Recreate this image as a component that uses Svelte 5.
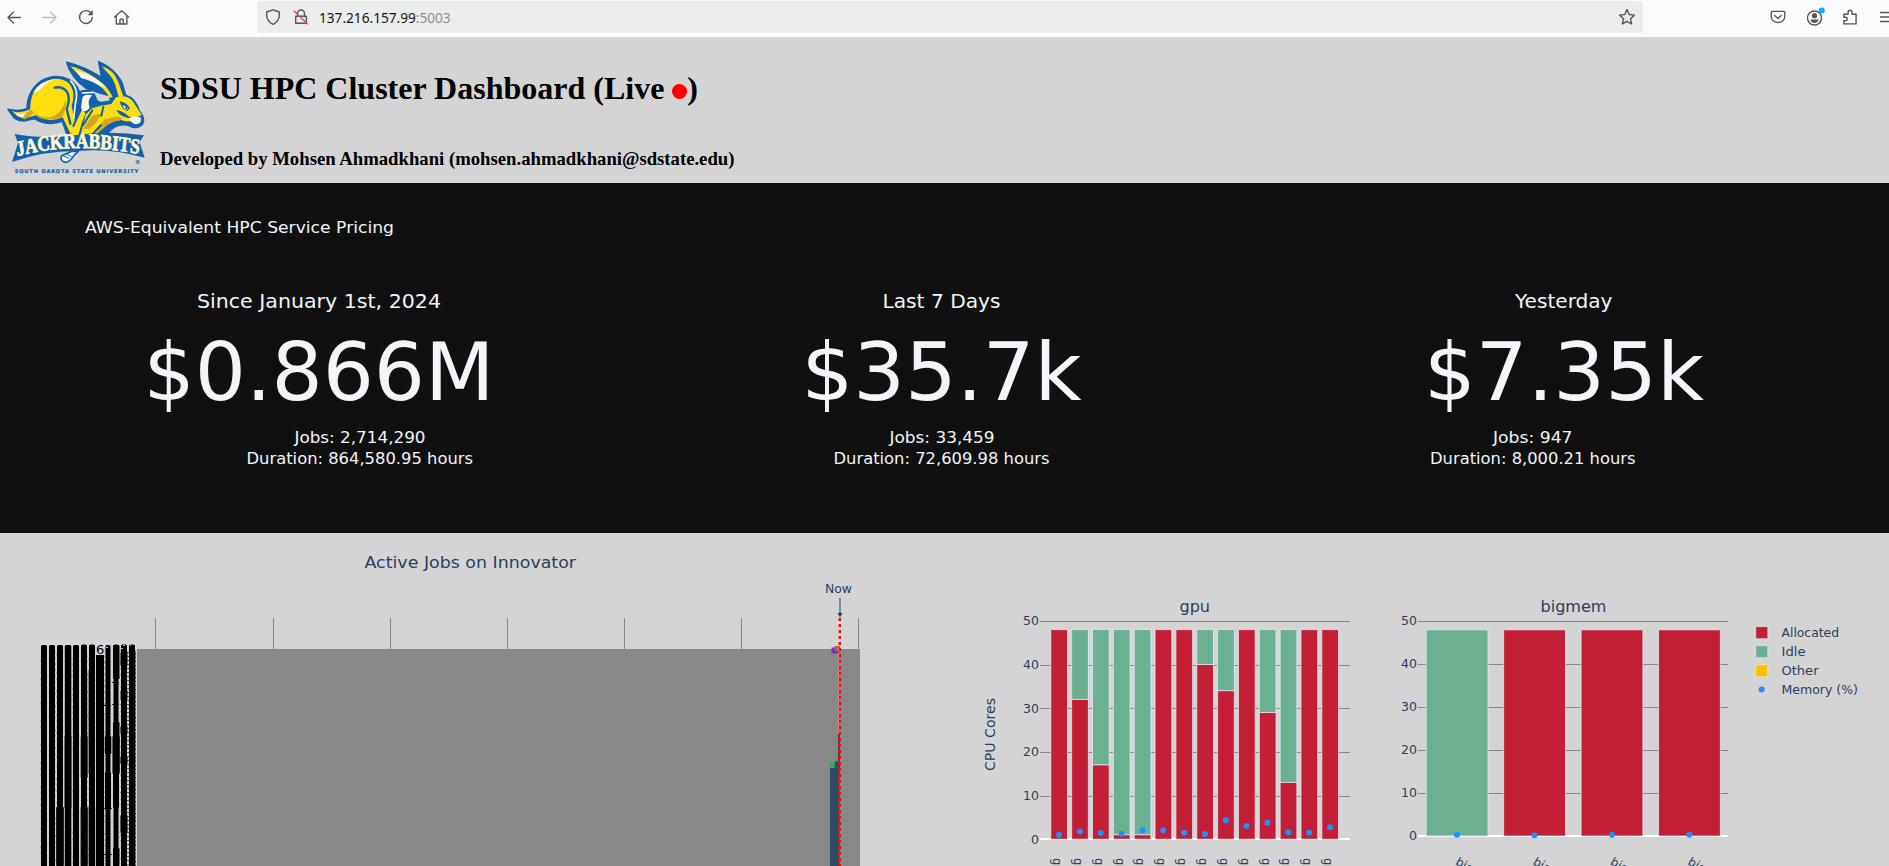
<script>
  const stats = [
    { title: 'Since January 1st, 2024', tx: [197, 441], value: '$0.866M', vx: [143.5, 494.5], jobs: 'Jobs: 2,714,290', jx: [294.5, 425.5], dur: 'Duration: 864,580.95 hours', dx: [246.5, 473] },
    { title: 'Last 7 Days', tx: [882.5, 1000.5], value: '$35.7k', vx: [801.5, 1081.5], jobs: 'Jobs: 33,459', jx: [889.5, 994.5], dur: 'Duration: 72,609.98 hours', dx: [833.5, 1049.5] },
    { title: 'Yesterday', tx: [1515, 1612.5], value: '$7.35k', vx: [1424, 1704], jobs: 'Jobs: 947', jx: [1493, 1572.5], dur: 'Duration: 8,000.21 hours', dx: [1430, 1635.5] }
  ];
  const gpu = [
    [48, 835], [32, 831.6], [17, 833], [1, 833.8], [1, 830.2], [48, 830.5], [48, 832.8],
    [40, 834], [34, 820.2], [48, 826], [29, 822.8], [13, 832.5], [48, 832.8], [48, 827.3]
  ];
  const bigmem = [[0, 834.8], [48, 835.3], [48, 834.8], [48, 834.8]];
  const ticks = [50, 40, 30, 20, 10, 0];
  const months = [155.5, 273.5, 390.5, 507.5, 624.5, 741.5, 858.5];
  const yG = (v) => 839.2 - v * 4.367;
  const yB = (v) => 836 - v * 4.296;
  const cols = [
    [41, 6, 645], [49, 6, 645], [57, 6, 645], [64.8, 6.5, 645], [73, 6, 645], [81, 6, 644.5],
    [89, 6, 644.5], [96, 8, 655], [105.5, 5, 645], [113.5, 5, 644.5], [121, 6, 644.5], [129, 6, 644.5]
  ];
  // swellings where the overlapping tick labels fill their column: x, y, width, height, opacity
  const swells = [
    [56, 807, 8, 59, 0.85], [80.5, 807, 7.5, 59, 0.8], [88, 807, 7.5, 59, 0.35], [64, 736, 8, 72, 0.4],
    [80.5, 736, 7.5, 42, 0.6], [87.5, 670, 1.5, 104, 0.35], [104.8, 736, 6.5, 18, 1], [105, 772, 6, 38, 1],
    [113, 645, 6.5, 34, 1], [113, 722, 6.5, 50, 1], [112.3, 736, 7.5, 38, 0.8], [113, 772, 6, 36, 1],
    [113, 848, 6.5, 18, 1], [120.4, 652, 7.2, 14, 0.8], [120.4, 690, 7.2, 10, 0.7], [120.4, 726, 7.2, 8, 0.8],
    [120.4, 756, 7.2, 8, 0.9], [120.4, 815, 7.2, 18, 0.9], [135, 650, 0.8, 216, 0.5]
  ];
  // deterministic speckles along the edges of the label columns
  const specks = [];
  for (let i = 0; i < 420; i++) {
    const c = cols[(i * 7) % 12];
    specks.push([i % 2 ? c[0] + c[1] : c[0] - 0.8, 650 + ((i * 53) % 214), 0.08 + ((i * 13) % 7) / 30]);
  }
  const fringe = Array.from({ length: 54 }, (_, i) => 652 + i * 4);
  const legend = [['Allocated', '#c21f37', 57.5], ['Idle', '#6cb092', 24], ['Other', '#ffc000', 37], ['Memory (%)', '', 76.5]];
</script>

<div class="page">
  <nav class="bar">
    <div class="nav">
      <svg width="16" height="16" viewBox="0 0 16 16"><path d="M14.500 8.500H2M7.500 3 2 8.500 7.500 14" /></svg>
      <svg class="dim" width="16" height="16" viewBox="0 0 16 16"><path d="M1 8.500h13M8.500 3 14 8.500 8.500 14" /></svg>
      <svg width="16" height="16" viewBox="0 0 16 16"><path d="M12.700 3.800A6.400 6.400 0 1 0 14.300 8.500" /><path class="solid" d="M14.800 1v5.200H9.600z" /></svg>
      <svg width="16" height="16" viewBox="0 0 16 16"><path d="M.6 8 7.600 1.700 14.600 8M2.300 7v8h10.600V7M5.900 15v-3.500q0-1.500 1.700-1.500t1.700 1.500V15" /></svg>
    </div>
    <div class="url">
      <svg width="16" height="16" viewBox="0 0 16 16"><path d="M8 .8 14.300 3v3.500Q14 12.500 8 15.300 2 12.500 1.700 6.500V3z" /></svg>
      <svg class="lock" width="16" height="16" viewBox="0 0 16 16"><path d="M4.500 7V4.500a3.500 3.500 0 0 1 7 0V7M2.700 7.200h10.600v7H2.700z" /><path class="slash" d="m1 2 13.500 13" /></svg>
      <span class="host">137.216.157.99</span><span class="port">:5003</span>
      <svg class="star" width="18" height="18" viewBox="0 0 18 18"><path d="m9 1.600 2.200 4.900 5.300.6-4 3.600 1.100 5.300L9 13.300 4.400 16l1.100-5.300-4-3.600 5.300-.6z" /></svg>
    </div>
    <div class="tools">
      <svg width="16" height="16" viewBox="0 0 16 16"><path d="M2.500 2.400h11q1.300 0 1.300 1.300v3.800a6.800 6 0 0 1-13.600 0V3.700q0-1.300 1.300-1.300zM4.800 6.500 8 9.500l3.200-3" /></svg>
      <svg class="acct" width="18" height="20" viewBox="0 0 18 20"><circle cx="7.500" cy="11" r="7" /><circle class="solid" cx="7.500" cy="8.700" r="2.600" /><path class="solid" d="M3.300 12.500h8.400Q10.500 16 7.500 16t-4.200-3.500z" /><circle class="dot" cx="14.800" cy="3.500" r="3" /></svg>
      <svg width="16" height="16" viewBox="0 0 16 16"><path d="M1.800 5.300h4.300V3.200a1.900 1.900 0 0 1 3.800 0v2.100h4.200v9.600H1.800v-3.200h1.800a1.700 1.700 0 0 0 0-3.400H1.800z" /></svg>
      <svg class="menu" width="9" height="16" viewBox="0 0 9 16"><path d="M0 3.500h9M0 8h9M0 12.500h9" /></svg>
    </div>
  </nav>

  <header>
    <svg class="logo" width="160" height="143" viewBox="0 0 480 429">
      <g stroke-linejoin="round" stroke-linecap="round">
        <path fill="#1161ad" stroke="#1161ad" stroke-width="5" d="M24 208Q55 216 81 206 83 151 124 123 164 98 208 119 229 130 239 158 243 149 277 152L287 173Q290 188 306 188L331 183 329 167Q292 158 258 144 215 116 200 67 253 80 305 113L296 65Q343 85 365 126L377 166Q405 174 418 213 437 238 428 251 412 270 389 257 349 246 323 280L300 294H205L187 244Q143 259 104 236L86 239Q65 249 43 234z" />
        <path fill="#ffde10" d="M34 212Q63 224 91 207 89 156 126 130 170 104 205 128 229 153 215 197L226 254 213 284 188 232Q145 250 107 226 72 239 55 229z" />
        <path fill="#d5a51c" d="M96 211Q114 235 150 231 183 226 198 177 199 213 184 232 144 246 109 226zM61 229Q83 220 92 207L101 218Q86 235 70 238z" />
        <path fill="#f6f6ef" d="M43 219Q65 226 78 219L69 232Q57 235 43 219zM99 158Q119 124 164 117 131 134 116 153zM247 174Q252 160 277 166 260 181 269 203 254 221 242 210z" />
        <path fill="none" stroke="#1161ad" stroke-width="7" d="M164 143Q192 137 204 161 210 184 200 206L211 251" />
        <path fill="none" stroke="#f6f6ef" stroke-width="5" d="M212 123Q238 148 226 191L221 236M247 159 281 157" />
        <path fill="#ffde10" d="M222 249 241 207 257 220 245 249 233 294H211zM257 224 276 205Q306 194 334 192L348 172Q379 162 398 183L425 225Q412 233 389 231 370 213 348 210 366 239 407 234 393 251 362 240 331 243 307 267L282 289H241z" />
        <path fill="#d5a51c" d="M276 227 306 220 286 251 267 267 249 267zM311 239 350 229Q372 233 362 240 331 243 307 267L287 284z" />
        <path fill="#ffde10" d="M211 79Q239 83 290 116 323 138 338 171L329 174Q315 145 276 127 240 112 211 79zM306 79Q340 88 355 126L370 170 356 170Q347 126 306 79z" />
        <path fill="#f6f6ef" d="M225 91Q280 103 321 145 277 128 248 119 237 107 225 91zM387 235Q405 224 423 233 426 249 412 252 396 255 387 235z" />
        <path fill="#1161ad" d="M240 114Q279 121 309 146L323 164Q280 155 257 142zM300 82Q333 100 346 134L351 166 340 166Q331 140 306 119zM359 184Q378 186 390 204L382 213Q365 208 359 184z" />
        <path fill="#fff" d="M367 195 385 204 379 210Q370 204 367 195z" /><circle cx="379" cy="204" r="3" fill="#12334e" />
        <path fill="none" stroke="#1161ad" stroke-width="6" d="M243 208 220 258M277 211 250 255M303 255 270 291M310 200 304 227" />
        <path fill="#1161ad" d="M44 282Q130 299 235 284 340 271 432 286L419 306 434 353Q328 324 235 333 131 332 36 366L54 310z" />
        <path fill="#f5f7f8" stroke="#1161ad" stroke-width="5" d="M216 334 185 347Q178 360 194 367 210 367 222 346L235 334z" />
        <path fill="none" stroke="#1161ad" stroke-width="3" d="m189 347 18 8m-9-14 16 9" />
      </g>
      <path id="arc" fill="none" d="M63 348Q280 303 513 343" />
      <g transform="scale(.82 1)"><text class="team"><textPath href="#arc">JACKRABBITS</textPath></text></g>
      <text class="school" x="44" y="398" textLength="371" lengthAdjust="spacing">SOUTH DAKOTA STATE UNIVERSITY</text>
      <text class="reg" x="404" y="371">®</text>
    </svg>
    <div class="heads">
      <h1>SDSU HPC Cluster Dashboard (Live <i></i>)</h1>
      <h3>Developed by Mohsen Ahmadkhani (mohsen.ahmadkhani@sdstate.edu)</h3>
    </div>
  </header>

  <section class="pricing">
    <svg width="1889" height="350" viewBox="0 183 1889 350">
      <text x="85" y="232.500" font-size="16.500" textLength="309" lengthAdjust="spacingAndGlyphs">AWS-Equivalent HPC Service Pricing</text>
      {#each stats as s}
        <text x={s.tx[0]} y="307.500" font-size="20" textLength={s.tx[1] - s.tx[0]} lengthAdjust="spacingAndGlyphs">{s.title}</text>
        <text x={s.vx[0]} y="400" font-size="80" textLength={s.vx[1] - s.vx[0]} lengthAdjust="spacingAndGlyphs">{s.value}</text>
        <text x={s.jx[0]} y="442.700" font-size="16" textLength={s.jx[1] - s.jx[0]} lengthAdjust="spacingAndGlyphs">{s.jobs}</text>
        <text x={s.dx[0]} y="464" font-size="16" textLength={s.dx[1] - s.dx[0]} lengthAdjust="spacingAndGlyphs">{s.dur}</text>
      {/each}
    </svg>
  </section>

  <section class="charts">
    <svg width="945" height="333" viewBox="0 533 945 333">
      <text x="364.500" y="568" font-size="16.500" textLength="211.500" lengthAdjust="spacingAndGlyphs">Active Jobs on Innovator</text>
      {#each months as m}<path stroke="#888" d="M{m} 618V650" />{/each}
      <path fill="#888" d="M137 649H860V866H137z" />
      {#each cols as c}<rect x={c[0]} y={c[2]} width={c[1]} height="230" rx={c[2] > 650 ? 0 : 1.5} />{/each}
      {#each swells as s}<rect x={s[0]} y={s[1]} width={s[2]} height={s[3]} opacity={s[4]} rx="1" />{/each}
      {#each specks as p}<rect x={p[0]} y={p[1]} width="1" height="2" opacity={p[2]} />{/each}
      {#each fringe as f}<path stroke="#000" opacity=".6" d="M127 {f}.5h2M135 {f + 1}.5h1" />{/each}
      <path stroke="#000" d="M104 808.500h8M104 854.500h8M112 704.500h7M104 705.500h7M112 682.500h7" stroke-width=".8" />
      <path fill="#bbb" d="M123 645h2v1h-2zM121 648h2v1h-2zM106 647h2v1h-2zM130 645h1v1h-1z" />
      <text x="96" y="653.500" class="id">6</text>
      <text x="825" y="593" font-size="12" textLength="27" lengthAdjust="spacingAndGlyphs">Now</text>
      <path stroke="#2a3f5f" stroke-width="1.800" opacity=".55" d="M840 598V614" /><path fill="#2a3f5f" d="M837.500 613h5L840 617.500z" />
      <path fill="#7a2bff" d="M831.500 647.500H837V653.500H831.500z" /><path fill="#6d34a8" d="M833.500 649.500H839V653H833.500z" />
      <path fill="#a9683c" d="M834.500 646H840V651.500H834.500z" />
      <path fill="#304b64" d="M838 734H840V768H839.500V866H830V768H838z" />
      <path fill="#27b34b" d="M830 762H834.500V768H830z" /><path fill="#35606a" d="M834.500 761H839V768H834.500z" /><path fill="#304b64" d="M835.500 762H839V767H835.500z" />
      <path stroke="#f08080" stroke-dasharray="3 3" d="M838.500 618V734" />
      <path stroke="#c81a1a" stroke-width="2" stroke-dasharray="3 3" d="M840 618V866" />
      <path stroke="#c81a1a" stroke-dasharray="3 3" d="M838.500 738V866" />
    </svg>

    <svg width="944" height="333" viewBox="945 533 944 333">
      <text x="1179.500" y="612" font-size="16" textLength="30.500" lengthAdjust="spacingAndGlyphs">gpu</text>
      <text x="1540.500" y="612" font-size="16" textLength="66" lengthAdjust="spacingAndGlyphs">bigmem</text>
      <text transform="translate(995 771) rotate(-90)" font-size="13.500" textLength="73" lengthAdjust="spacingAndGlyphs">CPU Cores</text>
      {#each ticks as t}
        <path stroke={t ? '#888' : '#fff'} stroke-width={t ? 1 : 2} d="M1040 {t ? Math.floor(yG(t) + 0.6) + 0.5 : 839}H1350M1418 {t ? Math.floor(yB(t)) + 0.5 : 836}H1728" />
        <text x="1039" y={yG(t) + 4.5} font-size="12.500" text-anchor="end">{t}</text>
        <text x="1417" y={yB(t) + 4} font-size="12.500" text-anchor="end">{t}</text>
      {/each}
      {#each gpu as g, i}
        {@const x = 1051 + i * 20.85}
        <g stroke="#e5ecf6" stroke-opacity=".75" stroke-width="1">
          {#if g[0] < 48}<rect x={x - 0.2} y={yG(48)} width="16.700" height={yG(g[0]) - yG(48)} fill="#6cb092" />{/if}
          <rect x={x - 0.2} y={yG(g[0])} width="16.700" height={g[0] * 4.367} fill="#c21f37" />
        </g>
        <circle cx={x + 8} cy={g[1]} r="3" fill="#1e90ff" />
        <text transform="translate({1053 + i * 20.85} 858) rotate(90)" font-size="11.500">g</text>
      {/each}
      {#each bigmem as b, i}
        {@const x = 1426.2 + i * 77.45}
        <rect {x} y={yB(48)} width="61.800" height={48 * 4.296} fill={b[0] ? '#c21f37' : '#6cb092'} stroke="#e5ecf6" stroke-opacity=".75" />
        <circle cx={x + 30.8} cy={b[1]} r="3" fill="#1e90ff" />
        <text transform="translate({x + 28.500} 864) rotate(30)" font-size="12">big</text>
      {/each}
      {#each legend as l, i}
        {#if l[1]}<rect x="1755.800" y={626.7 + i * 19} width="12" height="12" fill={l[1]} stroke="#e5ecf6" stroke-opacity=".6" />
        {:else}<circle cx="1761.700" cy="689.500" r="3" fill="#1e90ff" />{/if}
        <text x="1781.500" y={637 + i * 19} font-size="12" textLength={l[2]} lengthAdjust="spacingAndGlyphs">{l[0]}</text>
      {/each}
    </svg>
  </section>
</div>

<style>
  :global(body) { margin: 0; overflow: hidden; }
  .page { width: 1889px; height: 866px; overflow: hidden; background: #d4d4d4; display: flex; flex-direction: column; }
  svg { display: block; flex: none; }
  .bar { height: 37px; flex: none; box-sizing: border-box; padding-top: 1px; display: flex; align-items: flex-start; background: #fafcfb; }
  .bar svg { fill: none; stroke: #55555b; stroke-width: 1.4; stroke-linecap: round; stroke-linejoin: round; }
  .bar .dim { stroke: #bcbcbe; }
  .bar .solid { fill: #55555b; stroke: none; }
  .nav { width: 251px; padding: 8px 0 0 6px; display: flex; gap: 20px; }
  .url { width: 1386px; height: 32px; border-radius: 4px; background: #ebedec; display: flex; align-items: center; box-sizing: border-box; padding: 0 7px 0 8px; font: 13.65px "Noto Sans", "Open Sans", sans-serif; color: #15141a; }
  .url .lock { margin: 0 10px 0 12px; }
  .url .slash { stroke: #e8486b; }
  .url span { padding-top: 1px; }
  .port { color: #8c8d8f; }
  .url .star { margin-left: auto; }
  .tools { display: flex; padding: 8px 0 0 127px; }
  .tools .acct { margin: -2px 17px 0 21px; }
  .tools .dot { fill: #00b3f4; stroke: none; }
  .tools .menu { margin-left: 22px; stroke-linecap: butt; }
  header { height: 146px; flex: none; display: flex; box-sizing: border-box; padding-top: 3px; font-family: "Liberation Serif", serif; color: #000; }
  .team { font: bold 63px "Liberation Serif", serif; fill: #fffbe6; stroke: #fff3b8; stroke-width: 2.5; }
  .school { font: bold 15.5px "DejaVu Sans", sans-serif; fill: #1161ad; stroke: #1161ad; stroke-width: .6; }
  .reg { font: bold 17px "DejaVu Sans", sans-serif; fill: #1161ad; }
  .heads { display: flex; flex-direction: column; padding-top: 30px; }
  h1 { margin: 0; font-size: 32px; line-height: 37px; white-space: nowrap; }
  h1 i { display: inline-block; width: 15px; height: 15px; border-radius: 50%; background: #f00; vertical-align: 0; }
  h3 { margin: 41px 0 0; font-size: 18.72px; line-height: 22px; white-space: nowrap; }
  .pricing { height: 350px; flex: none; background: #101010; }
  .pricing text { fill: #f2f5fa; font-family: Verdana, "DejaVu Sans", sans-serif; }
  .charts { display: flex; height: 333px; }
  .charts text { fill: #2a3f5f; font-family: Verdana, "DejaVu Sans", sans-serif; }
  .charts .id { fill: #000; font-size: 13px; }
</style>
